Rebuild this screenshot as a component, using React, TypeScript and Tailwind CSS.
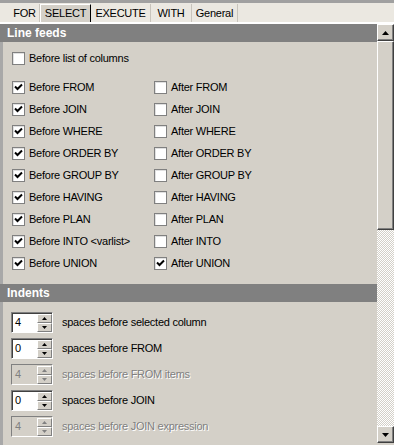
import React from "react";

const BEFORE = ["FROM", "JOIN", "WHERE", "ORDER BY", "GROUP BY", "HAVING", "PLAN", "INTO <varlist>", "UNION"];
const AFTER = ["FROM", "JOIN", "WHERE", "ORDER BY", "GROUP BY", "HAVING", "PLAN", "INTO", "UNION"];
const AFTER_CHECKED = ["UNION"];

const INDENTS = [
  { value: "4", label: "spaces before selected column", disabled: false },
  { value: "0", label: "spaces before FROM", disabled: false },
  { value: "4", label: "spaces before FROM items", disabled: true },
  { value: "0", label: "spaces before JOIN", disabled: false },
  { value: "4", label: "spaces before JOIN expression", disabled: true },
];

function Check({ checked, label }: { checked: boolean; label: string }) {
  return (
    <div className="flex items-center h-[22px]">
      <div className="w-[13px] h-[13px] bg-white border border-[#808080] shadow-[inset_1px_1px_0_#e0e0e0] flex items-center justify-center">
        {checked && (
          <svg width="9" height="9" viewBox="0 0 9 9">
            <path d="M1 3.5 L3.5 6 L8 1.5" stroke="#000" strokeWidth="2" fill="none" />
          </svg>
        )}
      </div>
      <span className="ml-[4px] text-[11px] tracking-[-0.25px] text-black">{label}</span>
    </div>
  );
}

function Spin({ value, label, disabled }: { value: string; label: string; disabled: boolean }) {
  const arrow = disabled ? "#808080" : "#000";
  return (
    <div className="flex items-center h-[26px]">
      <div className="flex w-[42px] h-[21px] border-t border-l border-[#808080] border-r border-b border-r-white border-b-white">
        <div className={`flex-1 flex items-center pl-[2px] border-t border-l border-[#404040] text-[11px] ${disabled ? "bg-[#d4d0c8] text-[#808080] border-[#d4d0c8]" : "bg-white text-black"}`}>
          {value}
        </div>
        <div className={`w-[15px] flex flex-col border-t border-[#404040] ${disabled ? "border-[#d4d0c8]" : ""}`}>
          <div className="flex-1 flex items-center justify-center bg-[#d4d0c8] border-t border-l border-white border-r border-b border-r-[#808080] border-b-[#808080]">
            <svg width="5" height="3" viewBox="0 0 5 3"><path d="M2.5 0 L5 3 L0 3 Z" fill={arrow} /></svg>
          </div>
          <div className="flex-1 flex items-center justify-center bg-[#d4d0c8] border-t border-l border-white border-r border-b border-r-[#808080] border-b-[#808080]">
            <svg width="5" height="3" viewBox="0 0 5 3"><path d="M0 0 L5 0 L2.5 3 Z" fill={arrow} /></svg>
          </div>
        </div>
      </div>
      <span
        className={`ml-[9px] text-[11px] tracking-[-0.25px] ${disabled ? "text-[#808080] [text-shadow:1px_1px_0_#fff]" : "text-black"}`}
      >
        {label}
      </span>
    </div>
  );
}

function Header({ title }: { title: string }) {
  return (
    <div className="h-[18px] bg-[#808080] text-white font-bold text-[12px] pl-[7px] flex items-center">
      {title}
    </div>
  );
}

function ScrollButton({ up }: { up: boolean }) {
  return (
    <div className="w-[17px] h-[17px] bg-[#d4d0c8] border-t border-l border-white border-r border-b border-r-[#404040] border-b-[#404040] shadow-[inset_-1px_-1px_0_#808080] flex items-center justify-center">
      <svg width="7" height="4" viewBox="0 0 7 4">
        <path d={up ? "M3.5 0 L7 4 L0 4 Z" : "M0 0 L7 0 L3.5 4 Z"} fill="#000" />
      </svg>
    </div>
  );
}

export default function App() {
  return (
    <div className="w-[394px] h-[445px] bg-[#d4d0c8] overflow-hidden flex flex-col font-['Liberation_Sans',Arial,sans-serif]">
      <div className="h-[3px] bg-[#a0a0a0]" />
      <div className="h-[19px] bg-[#ebe8e1] flex items-stretch pl-[10px] pt-[1px] text-[11px] tracking-[-0.25px] text-black">
        <div className="w-[30px] border-r border-[#c8c4bc] flex items-center justify-center">FOR</div>
        <div className="w-[51px] bg-[#d4d0c8] border-t border-l border-white border-r border-r-black flex items-center justify-center">SELECT</div>
        <div className="w-[60px] border-r border-[#c8c4bc] flex items-center justify-center">EXECUTE</div>
        <div className="w-[41px] border-r border-[#c8c4bc] flex items-center justify-center">WITH</div>
        <div className="w-[46px] border-r border-[#c8c4bc] flex items-center justify-center">General</div>
      </div>
      <div className="h-[2px] bg-white" />
      <div className="flex flex-1 min-h-0">
        <div className="flex-1 flex flex-col">
          <Header title="Line feeds" />
          <div className="border-l-[3px] border-[#a8a8a8] pl-[9px] pt-[5px] h-[242px]">
            <Check checked={false} label="Before list of columns" />
            <div className="grid grid-cols-[142px_1fr] mt-[7px]">
              {BEFORE.map((b, i) => (
                <React.Fragment key={b}>
                  <Check checked label={`Before ${b}`} />
                  <Check checked={AFTER_CHECKED.includes(AFTER[i])} label={`After ${AFTER[i]}`} />
                </React.Fragment>
              ))}
            </div>
          </div>
          <Header title="Indents" />
          <div className="border-l-[3px] border-[#a8a8a8] pl-[8px] pt-[7px] flex-1">
            {INDENTS.map((r, i) => (
              <Spin key={i} value={r.value} label={r.label} disabled={r.disabled} />
            ))}
          </div>
        </div>
        <div className="w-[17px] flex flex-col pb-[2px]">
          <ScrollButton up />
          <div className="h-[189px] bg-[#d4d0c8] border-t border-l border-white border-r border-b border-r-[#404040] border-b-[#404040] shadow-[inset_-1px_-1px_0_#808080]" />
          <div className="flex-1 bg-[repeating-conic-gradient(#ffffff_0%_25%,#d4d0c8_0%_50%)] bg-[length:2px_2px]" />
          <ScrollButton up={false} />
        </div>
      </div>
    </div>
  );
}
